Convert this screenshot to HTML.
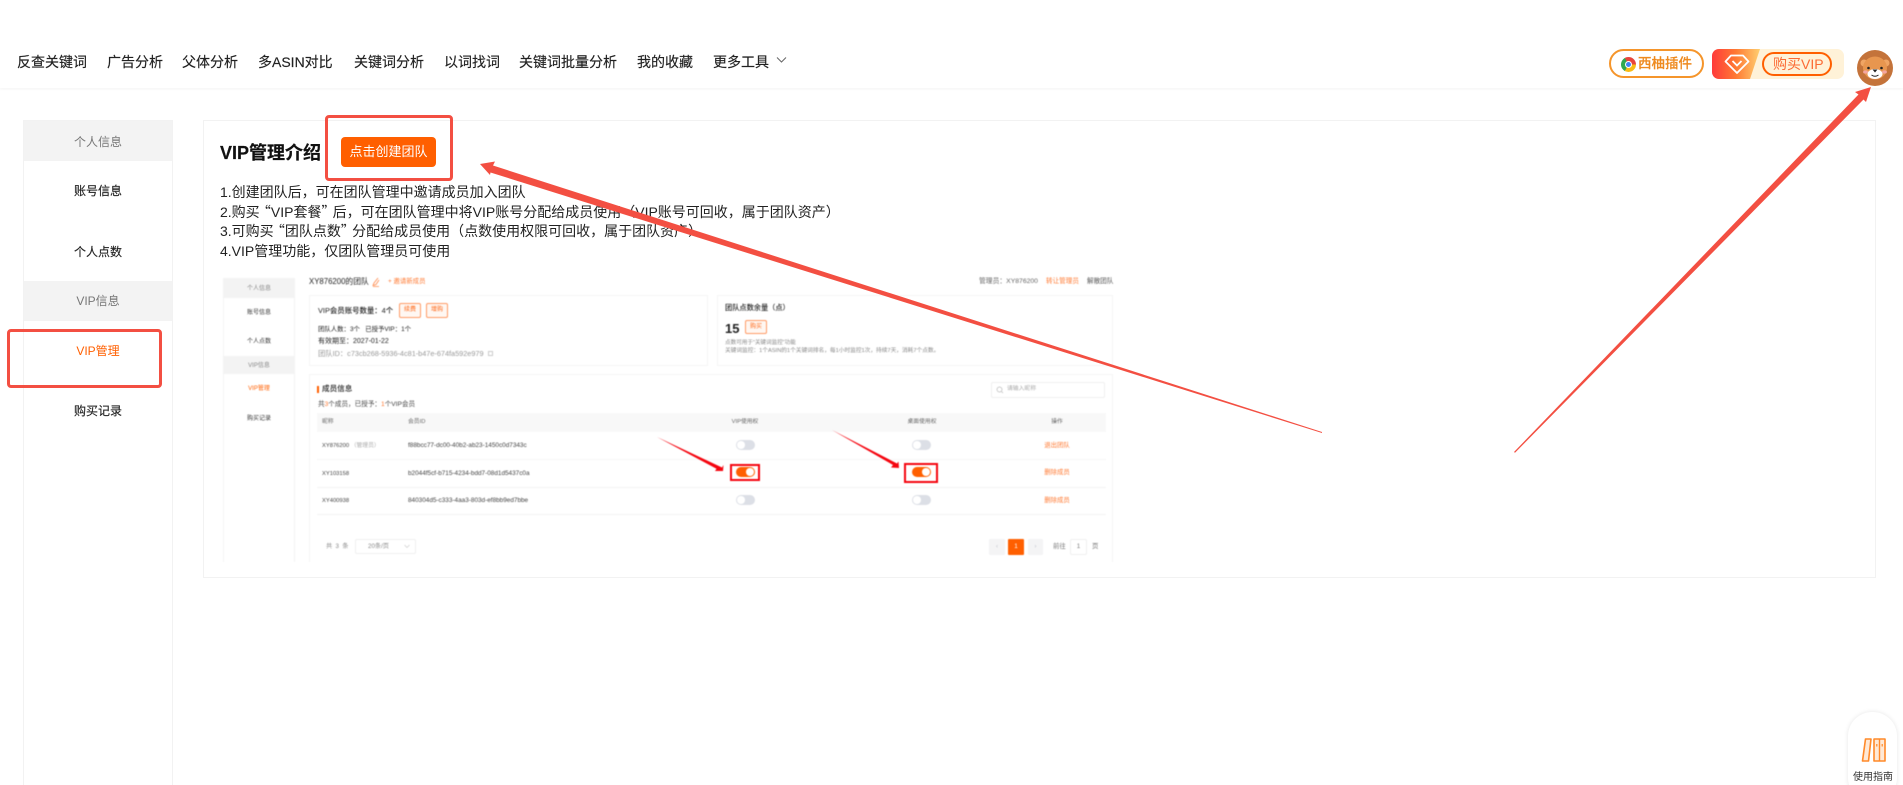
<!DOCTYPE html>
<html lang="zh"><head><meta charset="utf-8"><title>VIP管理</title>
<style>
*{box-sizing:border-box}
html,body{margin:0;padding:0;width:1903px;height:785px;overflow:hidden;background:#fff;font-family:"Liberation Sans","Noto Sans CJK SC",sans-serif;color:#222}
#root{position:absolute;left:0;top:0;width:1903px;height:785px;overflow:hidden}
.a{position:absolute}
.t{position:absolute;white-space:nowrap}
.n{font-size:14px;line-height:20px;top:52px;color:#222;-webkit-text-stroke:.15px #222}
.s{font-size:12px;line-height:20px;left:23px;width:150px;text-align:center}
.b{-webkit-text-stroke:.15px #222}
.l{font-size:14px;line-height:20px;left:220px;color:#222}
.qo{font-family:"Noto Sans CJK SC",sans-serif;margin-left:-2.8px}
.qc{font-family:"Noto Sans CJK SC",sans-serif;margin-right:-2.8px}
#img .t{line-height:10px}
.sw{position:absolute;width:19px;height:10px;border-radius:5px;background:#dcdfe6}
.sw:after{content:"";position:absolute;top:1.2px;left:1.2px;width:7.6px;height:7.6px;border-radius:50%;background:#fff}
.sw.on{background:#ff5f00}
.sw.on:after{left:10.2px}
.ob{position:absolute;border:.8px solid #ff9b66;border-radius:2px;color:#ff6a1a;font-size:6px;line-height:13px;text-align:center;background:#fff7f2}
.box{position:absolute;border:1px solid #f5f5f5;background:#fff}
.rd{position:absolute;border:3px solid #f34f42;border-radius:3px}
</style></head><body>
<div id="root">

<div class="a" style="left:0;top:0;width:1903px;height:88px;background:#fff;box-shadow:0 1px 3px rgba(0,0,0,.05)"></div>
<div class="t n" style="left:17px">反查关键词</div>
<div class="t n" style="left:107px">广告分析</div>
<div class="t n" style="left:182px">父体分析</div>
<div class="t n" style="left:258px">多ASIN对比</div>
<div class="t n" style="left:354px">关键词分析</div>
<div class="t n" style="left:444px">以词找词</div>
<div class="t n" style="left:519px">关键词批量分析</div>
<div class="t n" style="left:637px">我的收藏</div>
<div class="t n" style="left:713px">更多工具</div>
<svg class="a" style="left:776px;top:56px" width="11" height="8" viewBox="0 0 11 8"><path d="M1 1.5l4.5 4.5L10 1.5" fill="none" stroke="#666" stroke-width="1"/></svg>

<div class="a" style="left:1609px;top:49px;width:95px;height:29px;border:2px solid #f5952b;border-radius:15px;background:#fff"></div>
<div class="a" style="left:1620.5px;top:56.5px;width:15px;height:15px;border-radius:50%;background:conic-gradient(from -30deg,#e8453c 0 120deg,#f9bc15 120deg 240deg,#2fa84f 240deg 360deg)"></div>
<div class="a" style="left:1624.5px;top:60.5px;width:7px;height:7px;border-radius:50%;background:#3f84f3;border:1px solid #fff"></div>
<div class="t" style="left:1638px;top:54px;font-size:13.5px;line-height:20px;color:#ee8a1f;font-weight:500;-webkit-text-stroke:.2px #ee8a1f">西柚插件</div>

<div class="a" style="left:1712px;top:49px;width:132px;height:30px;border-radius:7px;background:#fff2d8"></div>
<svg class="a" style="left:1712px;top:49px" width="60" height="30" viewBox="0 0 60 30"><defs><linearGradient id="g" x1="0" x2="1" y1="0" y2="0"><stop offset="0" stop-color="#ff3a3a"/><stop offset=".5" stop-color="#ff7a33"/><stop offset="1" stop-color="#ffcf70"/></linearGradient></defs><path d="M7 0H48L38 30H7A7 7 0 0 1 0 23V7A7 7 0 0 1 7 0Z" fill="url(#g)"/><path d="M19 6.500H31L36.500 12.500L25 24L13.500 12.500Z" fill="none" stroke="#fff" stroke-width="1.800" stroke-linejoin="round"/><path d="M20.500 12l4.500 4.500 4.500-4.500" fill="none" stroke="#fff" stroke-width="1.800"/></svg>
<div class="a" style="left:1762px;top:52px;width:70px;height:24px;border:2px solid #ff5f00;border-radius:12px"></div>
<div class="t" style="left:1773px;top:54px;font-size:14px;line-height:20px;color:#fb6b35">购买VIP</div>

<svg class="a" style="left:1857px;top:50px" width="36" height="36" viewBox="0 0 36 36">
<circle cx="18" cy="18" r="18" fill="#c4733a"/>
<circle cx="7" cy="13" r="3.500" fill="#f0a564"/><circle cx="29" cy="13" r="3.500" fill="#f0a564"/>
<ellipse cx="18" cy="18" rx="12" ry="11.500" fill="#e8964f"/>
<circle cx="11.500" cy="18" r="1.300" fill="#222"/><circle cx="24.500" cy="18" r="1.300" fill="#222"/>
<ellipse cx="8.500" cy="22" rx="2.400" ry="1.600" fill="#f4a6a0"/><ellipse cx="27.500" cy="22" rx="2.400" ry="1.600" fill="#f4a6a0"/>
<ellipse cx="18" cy="24" rx="7.500" ry="5" fill="#fff"/>
<path d="M15.500 19.500h5L18 22.500Z" fill="#222"/><path d="M14.500 25q3.500 2.500 7 0" fill="none" stroke="#222" stroke-width="1"/>
</svg>

<!-- left panel -->
<div class="a" style="left:23px;top:120px;width:150px;height:700px;border:1px solid #f2f2f2;background:#fff"></div>
<div class="a" style="left:24px;top:121px;width:148px;height:40px;background:#f3f3f3"></div>
<div class="a" style="left:24px;top:281px;width:148px;height:40px;background:#f3f3f3"></div>
<div class="t s" style="top:132px;color:#777">个人信息</div>
<div class="t s b" style="top:181px;color:#222">账号信息</div>
<div class="t s b" style="top:242px;color:#222">个人点数</div>
<div class="t s" style="top:291px;color:#777">VIP信息</div>
<div class="t s" style="top:341px;color:#ff5f00">VIP管理</div>
<div class="t s b" style="top:401px;color:#222">购买记录</div>
<div class="rd" style="left:7px;top:329px;width:155px;height:59px;border-radius:4px"></div>

<!-- main panel -->
<div class="a" style="left:203px;top:120px;width:1673px;height:458px;border:1px solid #f2f2f2;background:#fff"></div>
<div class="t" style="left:220px;top:141px;font-size:18px;line-height:24px;font-weight:700;color:#111;-webkit-text-stroke:.2px #111">VIP管理介绍</div>
<div class="a" style="left:341px;top:137px;width:95px;height:30px;background:#ff5f00;border-radius:4px;color:#fff;font-size:13px;line-height:30px;text-align:center">点击创建团队</div>
<div class="t l" style="top:182px">1.创建团队后，可在团队管理中邀请成员加入团队</div>
<div class="t l" style="top:202px">2.购买<span class="qo">“</span>VIP套餐<span class="qc">”</span>后，可在团队管理中将VIP账号分配给成员使用（VIP账号可回收，属于团队资产）</div>
<div class="t l" style="top:221px">3.可购买<span class="qo">“</span>团队点数<span class="qc">”</span>分配给成员使用（点数使用权限可回收，属于团队资产）</div>
<div class="t l" style="top:241px">4.VIP管理功能，仅团队管理员可使用</div>

<!-- embedded screenshot -->
<div id="img" class="a" style="left:0;top:0;width:1903px;height:785px;filter:blur(.6px)">
<div class="a" style="left:223px;top:278px;width:72px;height:284px;border-right:1px solid #f3f3f3;border-left:1px solid #f5f5f5"></div>
<div class="a" style="left:223px;top:278px;width:72px;height:20px;background:#f3f3f3"></div>
<div class="a" style="left:223px;top:356px;width:72px;height:18px;background:#f3f3f3"></div>
<div class="t" style="left:223px;width:72px;text-align:center;top:284px;font-size:6px;color:#888">个人信息</div>
<div class="t" style="left:223px;width:72px;text-align:center;top:308px;font-size:6px;color:#333">账号信息</div>
<div class="t" style="left:223px;width:72px;text-align:center;top:337px;font-size:6px;color:#333">个人点数</div>
<div class="t" style="left:223px;width:72px;text-align:center;top:361px;font-size:6px;color:#888">VIP信息</div>
<div class="t" style="left:223px;width:72px;text-align:center;top:384px;font-size:6px;color:#ff5f00">VIP管理</div>
<div class="t" style="left:223px;width:72px;text-align:center;top:414px;font-size:6px;color:#333">购买记录</div>

<div class="t" style="left:309px;top:277px;font-size:7.8px;color:#222">XY876200的团队</div>
<svg class="a" style="left:372px;top:277px" width="8" height="10" viewBox="0 0 8 10"><path d="M6 1L2 6 1 8.500 4 7.500 7 3M1 9.500h6" fill="none" stroke="#ff8a4c" stroke-width=".8"/></svg>
<div class="t" style="left:388px;top:277px;font-size:6.400px;color:#ff7a33">+ 邀请新成员</div>
<div class="t" style="left:979px;top:277px;font-size:6.800px;color:#666">管理员：XY876200</div>
<div class="t" style="left:1046px;top:277px;font-size:6.600px;color:#ff7a33">转让管理员</div>
<div class="t" style="left:1087px;top:277px;font-size:6.600px;color:#555">解散团队</div>

<div class="box" style="left:309px;top:295px;width:399px;height:71px"></div>
<div class="t" style="left:318px;top:306px;font-size:7.400px;color:#222;font-weight:500">VIP会员账号数量：4个</div>
<div class="ob" style="left:399px;top:303px;width:22px;height:15px">续费</div>
<div class="ob" style="left:426px;top:303px;width:22px;height:15px">增购</div>
<div class="t" style="left:318px;top:325px;font-size:6.400px;color:#222">团队人数：3个&nbsp;&nbsp;&nbsp;已授予VIP：1个</div>
<div class="t" style="left:318px;top:337px;font-size:7px;color:#222">有效期至：2027-01-22</div>
<div class="t" style="left:318px;top:349px;font-size:7.300px;color:#999">团队ID：c73cb268-5936-4c81-b47e-674fa592e979</div>
<div class="a" style="left:488px;top:351px;width:5px;height:5px;border:.7px solid #ccc"></div>

<div class="box" style="left:717px;top:295px;width:396px;height:71px"></div>
<div class="t" style="left:725px;top:303px;font-size:7.200px;color:#222;font-weight:500">团队点数余量（点）</div>
<div class="t" style="left:725px;top:324px;font-size:13px;font-weight:700;color:#222">15</div>
<div class="ob" style="left:745px;top:320px;width:22px;height:14px">购买</div>
<div class="t" style="left:725px;top:338px;font-size:5.600px;color:#888">点数可用于“关键词监控”功能</div>
<div class="t" style="left:725px;top:346px;font-size:5.700px;color:#888">关键词监控：1个ASIN的1个关键词排名，每1小时监控1次，持续7天，消耗7个点数。</div>

<div class="box" style="left:309px;top:374px;width:804px;height:188px;border-bottom:0"></div>
<div class="a" style="left:317px;top:386px;width:2px;height:7px;background:#ff5f00"></div>
<div class="t" style="left:322px;top:384px;font-size:7.600px;color:#222;font-weight:500">成员信息</div>
<div class="t" style="left:318px;top:400px;font-size:6.600px;color:#444">共<span style="color:#ff7a33">3</span>个成员，已授予：<span style="color:#ff7a33">1</span>个VIP会员</div>
<div class="a" style="left:991px;top:382px;width:114px;height:16px;border:1px solid #f0f0f0;border-radius:2px"></div>
<svg class="a" style="left:996px;top:386px" width="8" height="8" viewBox="0 0 8 8"><circle cx="3.500" cy="3.500" r="2.500" fill="none" stroke="#bbb" stroke-width=".7"/><path d="M5.500 5.500L7 7" stroke="#bbb" stroke-width=".7"/></svg>
<div class="t" style="left:1007px;top:384px;font-size:5.800px;color:#aaa">请输入昵称</div>

<div class="a" style="left:317px;top:413px;width:789px;height:19px;background:#f8f8f8"></div>
<div class="t" style="left:322px;top:417px;font-size:5.800px;color:#666">昵称</div>
<div class="t" style="left:408px;top:417px;font-size:5.800px;color:#666">会员ID</div>
<div class="t" style="left:715px;width:60px;text-align:center;top:417px;font-size:5.800px;color:#666">VIP使用权</div>
<div class="t" style="left:892px;width:60px;text-align:center;top:417px;font-size:5.800px;color:#666">桌面使用权</div>
<div class="t" style="left:1027px;width:60px;text-align:center;top:417px;font-size:5.800px;color:#666">操作</div>

<div class="a" style="left:317px;top:459px;width:789px;height:1px;background:#f6f6f6"></div>
<div class="a" style="left:317px;top:487px;width:789px;height:1px;background:#f3f3f3"></div>
<div class="a" style="left:317px;top:514px;width:789px;height:1px;background:#f3f3f3"></div>

<div class="t" style="left:322px;top:441px;font-size:5.800px;color:#444">XY876200 <span style="color:#aaa">（管理员）</span></div>
<div class="t" style="left:408px;top:441px;font-size:6.400px;color:#444">f88bcc77-dc00-40b2-ab23-1450c0d7343c</div>
<div class="t" style="left:322px;top:469px;font-size:5.800px;color:#444">XY103158</div>
<div class="t" style="left:408px;top:469px;font-size:6.400px;color:#444">b2044f5cf-b715-4234-bdd7-08d1d5437c0a</div>
<div class="t" style="left:322px;top:496px;font-size:5.800px;color:#444">XY400938</div>
<div class="t" style="left:408px;top:496px;font-size:6.400px;color:#444">840304d5-c333-4aa3-803d-ef8bb9ed7bbe</div>

<div class="sw" style="left:736px;top:440px"></div>
<div class="sw on" style="left:736px;top:467px"></div>
<div class="sw" style="left:736px;top:495px"></div>
<div class="sw" style="left:912px;top:440px"></div>
<div class="sw on" style="left:912px;top:467px"></div>
<div class="sw" style="left:912px;top:495px"></div>
<div class="a" style="left:730px;top:464px;width:30px;height:17px;border:2px solid #f5050f"></div>
<div class="a" style="left:904px;top:463px;width:34px;height:20px;border:2px solid #f5050f"></div>

<div class="t" style="left:1027px;width:60px;text-align:center;top:441px;font-size:6.400px;color:#ff7a33">退出团队</div>
<div class="t" style="left:1027px;width:60px;text-align:center;top:468px;font-size:6.400px;color:#ff7a33">删除成员</div>
<div class="t" style="left:1027px;width:60px;text-align:center;top:496px;font-size:6.400px;color:#ff7a33">删除成员</div>

<div class="t" style="left:326px;top:542px;font-size:6.200px;color:#888;letter-spacing:.8px">共 3 条</div>
<div class="a" style="left:355px;top:539px;width:61px;height:15px;border:1px solid #f0f0f0;border-radius:2px"></div>
<div class="t" style="left:368px;top:542px;font-size:6.200px;color:#888">20条/页</div>
<svg class="a" style="left:404px;top:544px" width="6" height="5" viewBox="0 0 6 5"><path d="M.5 1l2.500 2.500L5.500 1" fill="none" stroke="#ccc" stroke-width=".7"/></svg>
<div class="a" style="left:989px;top:539px;width:16px;height:16px;background:#f4f4f5;border-radius:1px;color:#c0c4cc;font-size:6px;line-height:16px;text-align:center">‹</div>
<div class="a" style="left:1008px;top:539px;width:16px;height:16px;background:#ff5f00;border-radius:1px;color:#fff;font-size:6.400px;line-height:16px;text-align:center">1</div>
<div class="a" style="left:1028px;top:539px;width:15px;height:16px;background:#f4f4f5;border-radius:1px;color:#c0c4cc;font-size:6px;line-height:16px;text-align:center">›</div>
<div class="t" style="left:1053px;top:542px;font-size:6.400px;color:#777">前往</div>
<div class="a" style="left:1070px;top:539px;width:17px;height:16px;border:1px solid #f0f0f0;border-radius:2px;color:#777;font-size:6.200px;line-height:14px;text-align:center">1</div>
<div class="t" style="left:1092px;top:542px;font-size:6.400px;color:#777">页</div>

<svg class="a" style="left:0;top:0" width="1903" height="785" viewBox="0 0 1903 785">
<path d="M657 437L722 467.500L723.500 465L723 471L715 471L716.500 468.800Z" fill="#f5050f"/>
<path d="M832 430L897 463.500L898.500 461.500L899 468L891 467.500L893 465Z" fill="#f5050f"/>
</svg>
</div>

<!-- big annotation arrows -->
<div class="rd" style="left:325px;top:115px;width:128px;height:66px;border-radius:4px"></div>
<svg class="a" style="left:0;top:0" width="1903" height="785" viewBox="0 0 1903 785">
<path d="M480 164L495 161.500L493 165.500L1322 432L1322 433L490.500 172.500L490 175Z" fill="#f34f42"/>
<path d="M1871 87L1855 92L1858.500 94.500L1514 452L1515 452.800L1863.500 99.500L1866 102Z" fill="#f34f42"/>
</svg>

<!-- guide widget -->
<div class="a" style="left:1848px;top:712px;width:49px;height:90px;border-radius:24px;background:#fff;box-shadow:0 0 5px rgba(0,0,0,.1)"></div>
<svg class="a" style="left:1860px;top:736px" width="28" height="28" viewBox="0 0 28 28">
<path d="M5.500 3H11L8.500 25H2.500Z" fill="#ffe9d6" stroke="#ff8a2a" stroke-width="1.600" stroke-linejoin="round"/>
<path d="M14 3H25V25H14Z" fill="#ffe9d6" stroke="#ff8a2a" stroke-width="1.600" stroke-linejoin="round"/>
<path d="M19.500 3V25" stroke="#ff8a2a" stroke-width="1.400"/>
<path d="M16.800 8v2.500M22.200 8v2.500" stroke="#ff8a2a" stroke-width="1.200"/>
</svg>
<div class="t" style="left:1853px;top:772px;font-size:10px;line-height:12px;color:#333">使用指南</div>

</div>
</body></html>
